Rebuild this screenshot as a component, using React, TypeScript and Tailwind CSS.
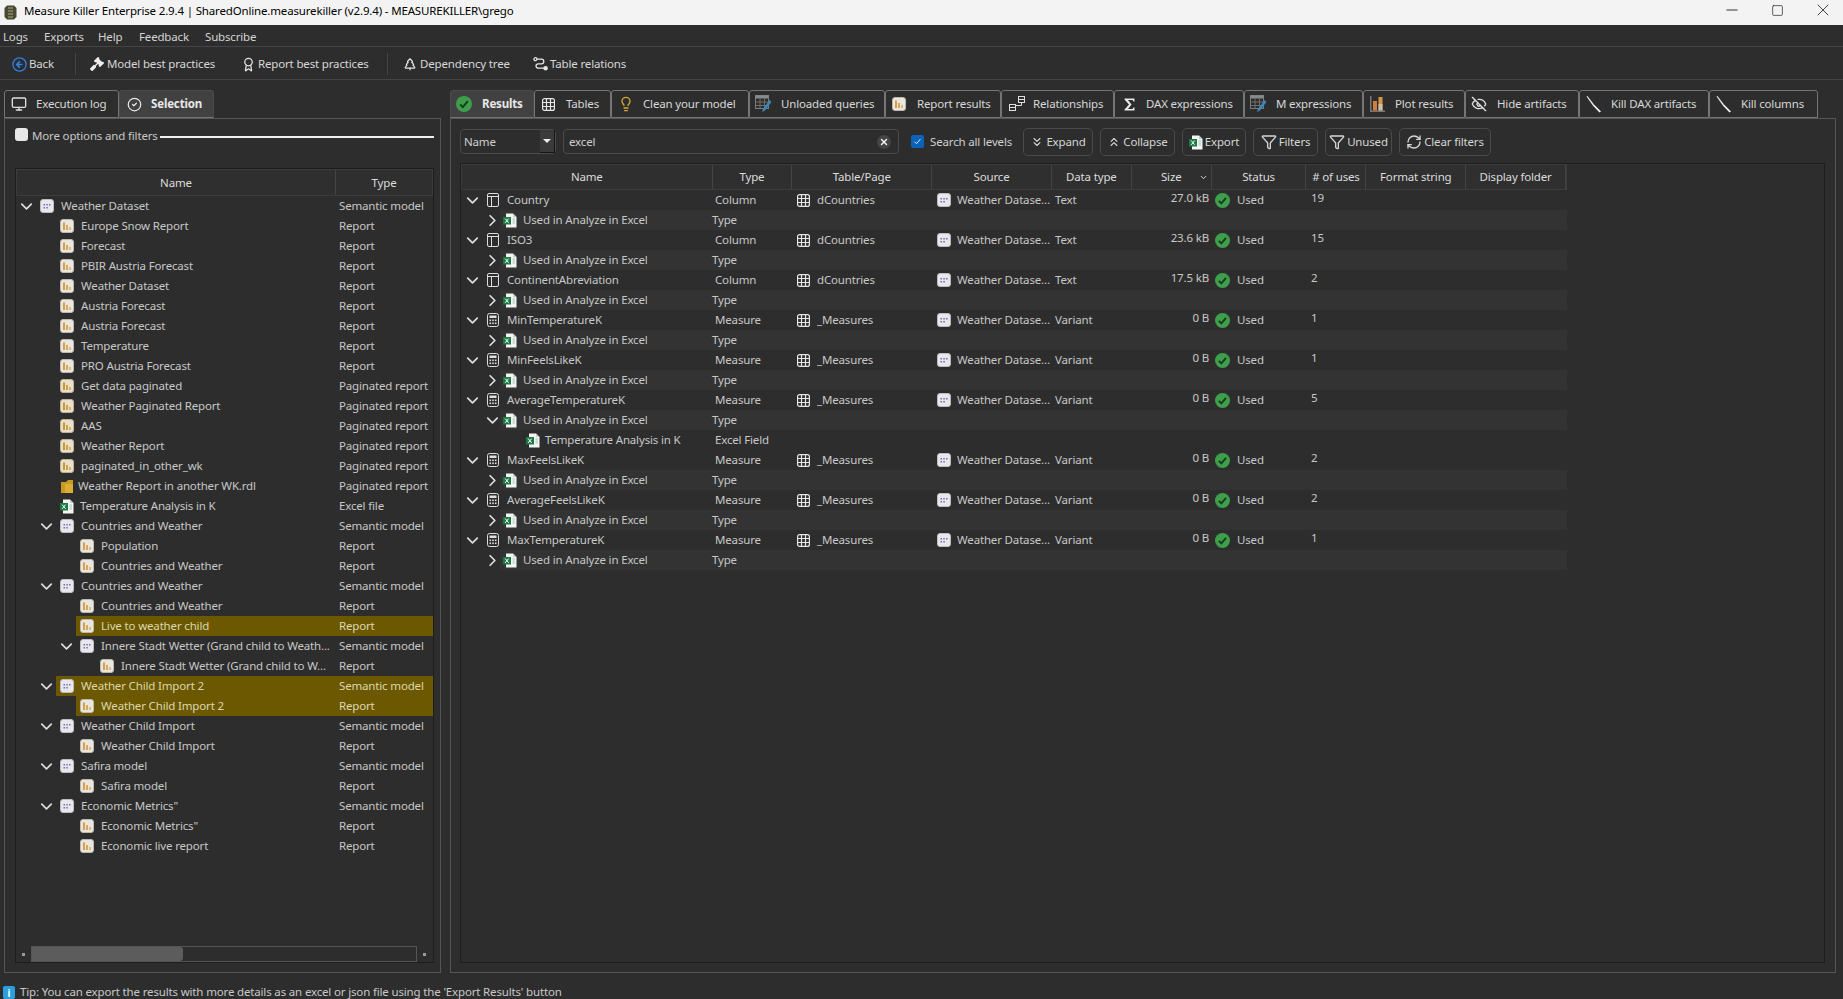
import type { ReactNode } from "react"
import {
  Award,
  ChevronDown,
  ChevronRight,
  ChevronsDown,
  ChevronsUp,
  CircleCheck,
  EyeOff,
  Funnel,
  Lightbulb,
  Minus,
  Monitor,
  RefreshCw,
  Square,
  TreePine,
  X,
} from "lucide-react"
import { FaGavel } from "react-icons/fa"

function ReportIcon() {
  return (
    <svg width="14" height="14" viewBox="0 0 14 14" className="shrink-0">
      <rect x="0.5" y="0.5" width="13" height="13" rx="2.5" fill="#e9e6e0" stroke="#bdb9b0" />
      <rect x="3" y="3.5" width="2" height="7.5" fill="#d99f45" />
      <rect x="6" y="6" width="2" height="5" fill="#d9a654" />
      <rect x="9" y="8" width="2" height="3" fill="#dfb878" />
    </svg>
  )
}

function PaginatedIcon() {
  return (
    <svg width="14" height="14" viewBox="0 0 14 14" className="shrink-0">
      <rect x="0.5" y="0.5" width="13" height="13" rx="2.5" fill="#e9e0cc" stroke="#bdb39c" />
      <rect x="3" y="3.5" width="2" height="7.5" fill="#c9962f" />
      <rect x="6" y="6" width="2" height="5" fill="#d0a040" />
      <rect x="9" y="8" width="2" height="3" fill="#d8b060" />
    </svg>
  )
}

function GoldIcon() {
  return (
    <svg width="14" height="15" viewBox="0 0 14 15" className="shrink-0">
      <path d="M1 3h5l2-2h5v13H1z" fill="#c79a26" />
      <rect x="5" y="5" width="8" height="9" fill="#dcae33" />
    </svg>
  )
}

function ModelIcon() {
  return (
    <svg width="14" height="14" viewBox="0 0 14 14" className="shrink-0">
      <rect x="0.5" y="0.5" width="13" height="13" rx="2.5" fill="#e8e8ec" stroke="#bcbcc2" />
      <g fill="#6f6fb5">
        <rect x="3.5" y="5" width="1.5" height="1.5" />
        <rect x="6.3" y="5" width="1.5" height="1.5" />
        <rect x="9" y="5" width="1.5" height="1.5" />
        <rect x="3.5" y="8" width="1.5" height="1.5" />
        <rect x="6.3" y="8" width="1.5" height="1.5" />
      </g>
    </svg>
  )
}

function ExcelIcon() {
  return (
    <svg width="14" height="15" viewBox="0 0 14 15" className="shrink-0">
      <path d="M3 0.5h7l3.5 3.5v10.5H3z" fill="#f5f5f5" />
      <path d="M10 0.5l3.5 3.5H10z" fill="#c9c9c9" />
      <rect x="0" y="4" width="8" height="7.5" fill="#1e7a45" />
      <path d="M2.2 5.6l3.4 4.2M5.6 5.6l-3.4 4.2" stroke="#fff" strokeWidth="1" />
      <path d="M9.5 6h2.5M9.5 8h2.5M9.5 10h2.5" stroke="#9bc9ac" strokeWidth="1" />
    </svg>
  )
}

function TableIcon() {
  return (
    <svg width="13" height="13" viewBox="0 0 13 13" fill="none" stroke="#e6e6e6" strokeWidth="1.2" className="shrink-0">
      <rect x="0.6" y="0.6" width="11.8" height="11.8" rx="2" />
      <path d="M4.5 0.6v11.8M8.5 0.6v11.8M0.6 4.5h11.8M0.6 8.5h11.8" />
    </svg>
  )
}

function ColumnIcon() {
  return (
    <svg width="13" height="14" viewBox="0 0 13 14" fill="none" stroke="#dedede" strokeWidth="1" className="shrink-0">
      <rect x="0.5" y="0.5" width="11" height="13" rx="1.5" />
      <path d="M0.5 3.5h11M4.5 3.5v10" />
    </svg>
  )
}

function MeasureIcon() {
  return (
    <svg width="13" height="14" viewBox="0 0 13 14" fill="none" stroke="#dedede" strokeWidth="1" className="shrink-0">
      <rect x="0.5" y="0.5" width="11" height="13" rx="2" />
      <rect x="2.5" y="2.5" width="7" height="2.5" fill="#dedede" stroke="none" />
      <g fill="#dedede" stroke="none">
        <rect x="2.5" y="6.5" width="1.6" height="1.6" />
        <rect x="5.2" y="6.5" width="1.6" height="1.6" />
        <rect x="7.9" y="6.5" width="1.6" height="1.6" />
        <rect x="2.5" y="9.5" width="1.6" height="1.6" />
        <rect x="5.2" y="9.5" width="1.6" height="1.6" />
        <rect x="7.9" y="9.5" width="1.6" height="1.6" />
      </g>
    </svg>
  )
}

function GreenCheck({ size = 15 }: { size?: number }) {
  return (
    <svg width={size} height={size} viewBox="0 0 16 16" className="shrink-0">
      <circle cx="8" cy="8" r="8" fill="#3f9e4b" />
      <path d="M4.2 8.4l2.6 2.7 5-6" fill="none" stroke="#173c1d" strokeWidth="2" />
    </svg>
  )
}

function BackIcon() {
  return (
    <svg width="15" height="15" viewBox="0 0 15 15" fill="none" stroke="#2f80e4" strokeWidth="1.3" className="shrink-0">
      <circle cx="7.5" cy="7.5" r="6.6" />
      <path d="M7.8 4.4L4.7 7.5l3.1 3.1M5 7.5h5.4" strokeWidth="1.6" />
    </svg>
  )
}

function RelationIcon() {
  return (
    <svg width="15" height="15" viewBox="0 0 15 15" fill="none" stroke="#e6e6e6" strokeWidth="1.3" className="shrink-0">
      <circle cx="2.4" cy="2.2" r="1.5" />
      <path d="M4 2.2h4.5a2 2 0 0 1 0 4.6H5.2a2 2 0 0 0 0 4.4h6" />
      <circle cx="12.6" cy="11.2" r="1.6" fill="#e6e6e6" />
    </svg>
  )
}

function TablePencilIcon() {
  return (
    <svg width="18" height="18" viewBox="0 0 18 18" fill="none" className="shrink-0">
      <rect x="0.5" y="0.5" width="13" height="13" stroke="#7c7c7c" />
      <rect x="0.5" y="0.5" width="13" height="3" fill="#8a8a8a" />
      <path d="M5 3.5v10M9.5 3.5v10M0.5 7h13M0.5 10.5h13" stroke="#6e6e6e" />
      <path d="M14.5 5L8 14l-1 3 3-1.5L16.5 7z" fill="#3c86b8" />
    </svg>
  )
}

function PlotIcon() {
  return (
    <svg width="15" height="16" viewBox="0 0 15 16" className="shrink-0">
      <rect x="0" y="0" width="1.5" height="16" fill="#777" />
      <rect x="0" y="14.5" width="15" height="1.5" fill="#777" />
      <rect x="3" y="5" width="4" height="9.5" fill="#d17f37" />
      <rect x="8.5" y="1" width="4" height="13.5" fill="#d89544" />
      <rect x="8.5" y="8" width="4" height="6.5" fill="#c9bfb0" />
    </svg>
  )
}

function RelationshipsIcon() {
  return (
    <svg width="16" height="16" viewBox="0 0 16 16" fill="none" stroke="#dedede" strokeWidth="1" className="shrink-0">
      <rect x="0.5" y="8.5" width="6" height="6" />
      <path d="M0.5 11.5h6" />
      <rect x="9.5" y="0.5" width="6" height="6" />
      <path d="M9.5 3.5h6M12.5 6.5v3H6.5" />
    </svg>
  )
}

function KillIcon() {
  return (
    <svg width="16" height="17" viewBox="0 0 16 17" className="shrink-0">
      <path d="M0.5 0.5L1.5 0L8 8.5L6.8 9.5z" fill="#e8e8e8" />
      <path d="M6.8 9.5L8 8.5L15 15.5L13.5 16.5z" fill="#f5f5f5" />
    </svg>
  )
}

function SigmaIcon() {
  return (
    <svg width="11" height="13" viewBox="0 0 11 13" className="shrink-0">
      <path d="M0.5 0.5h10v3h-1l-1-1.4H4L7.5 6.5 4 11h4.5l1-1.5h1v3h-10v-1L5 6.6 0.5 1.5z" fill="#e8e8e8" />
    </svg>
  )
}

function AppLogo() {
  return (
    <svg width="13" height="15" viewBox="0 0 13 15" className="shrink-0">
      <path d="M3 0.5h7l2.5 2.5v9L10 14.5H3L0.5 12V3z" fill="#4a4a34" />
      <path d="M4 3h5M4 6h5M4 9h5M4 12h5" stroke="#a8a888" strokeWidth="1.2" />
    </svg>
  )
}

function ChevDown() {
  return <ChevronDown size={19} strokeWidth={2.2} color="#dcdcdc" className="shrink-0" />
}

function ChevRight() {
  return <ChevronRight size={19} strokeWidth={2.2} color="#dcdcdc" className="shrink-0" />
}

const tabsRight: { label: string; w: string; icon: ReactNode; active?: boolean; pl: string }[] = [
  { label: "Results", w: "w-[84px]", icon: <GreenCheck size={16} />, active: true, pl: "pl-[5px]" },
  { label: "Tables", w: "w-[77px]", icon: <TableIcon />, pl: "pl-[7px]" },
  { label: "Clean your model", w: "w-[138px]", icon: <Lightbulb size={16} color="#d8a93a" className="shrink-0" />, pl: "pl-[6px]" },
  { label: "Unloaded queries", w: "w-[136px]", icon: <TablePencilIcon />, pl: "pl-[5px]" },
  { label: "Report results", w: "w-[116px]", icon: <ReportIcon />, pl: "pl-[6px]" },
  { label: "Relationships", w: "w-[113px]", icon: <RelationshipsIcon />, pl: "pl-[7px]" },
  { label: "DAX expressions", w: "w-[130px]", icon: <SigmaIcon />, pl: "pl-[9px]" },
  { label: "M expressions", w: "w-[119px]", icon: <TablePencilIcon />, pl: "pl-[5px]" },
  { label: "Plot results", w: "w-[102px]", icon: <PlotIcon />, pl: "pl-[6px]" },
  { label: "Hide artifacts", w: "w-[114px]", icon: <EyeOff size={16} color="#e0e0e0" className="shrink-0" />, pl: "pl-[5px]" },
  { label: "Kill DAX artifacts", w: "w-[130px]", icon: <KillIcon />, pl: "pl-[6px]" },
  { label: "Kill columns", w: "w-[109px]", icon: <KillIcon />, pl: "pl-[6px]" },
]

type TreeRow = {
  name: string
  type: string
  level: 0 | 1 | 2 | 3
  kind: "model" | "report" | "paginated" | "gold" | "excel"
  open?: boolean
  hl?: boolean
}

const r = (name: string, level: TreeRow["level"] = 1): TreeRow => ({ name, type: "Report", level, kind: "report" })
const p = (name: string): TreeRow => ({ name, type: "Paginated report", level: 1, kind: "paginated" })
const m = (name: string, level: TreeRow["level"] = 1): TreeRow => ({ name, type: "Semantic model", level, kind: "model", open: true })

const treeRows: TreeRow[] = [
  m("Weather Dataset", 0),
  r("Europe Snow Report"),
  r("Forecast"),
  r("PBIR Austria Forecast"),
  r("Weather Dataset"),
  r("Austria Forecast"),
  r("Austria Forecast"),
  r("Temperature"),
  r("PRO Austria Forecast"),
  p("Get data paginated"),
  p("Weather Paginated Report"),
  p("AAS"),
  p("Weather Report"),
  p("paginated_in_other_wk"),
  { name: "Weather Report in another WK.rdl", type: "Paginated report", level: 1, kind: "gold" },
  { name: "Temperature Analysis in K", type: "Excel file", level: 1, kind: "excel" },
  m("Countries and Weather"),
  r("Population", 2),
  r("Countries and Weather", 2),
  m("Countries and Weather"),
  r("Countries and Weather", 2),
  { ...r("Live to weather child", 2), hl: true },
  m("Innere Stadt Wetter (Grand child to Weath...", 2),
  r("Innere Stadt Wetter (Grand child to W...", 3),
  { ...m("Weather Child Import 2"), hl: true },
  { ...r("Weather Child Import 2", 2), hl: true },
  m("Weather Child Import"),
  r("Weather Child Import", 2),
  m("Safira model"),
  r("Safira model", 2),
  m("Economic Metrics\""),
  r("Economic Metrics\"", 2),
  r("Economic live report", 2),
]

const levelPad = ["pl-0", "pl-[20px]", "pl-[40px]", "pl-[60px]"]

function TreeIcon({ kind }: { kind: TreeRow["kind"] }) {
  if (kind === "model") return <ModelIcon />
  if (kind === "report") return <ReportIcon />
  if (kind === "paginated") return <PaginatedIcon />
  if (kind === "gold") return <GoldIcon />
  return <ExcelIcon />
}

type ResultRow =
  | { t: "col"; name: string; table: string; size: string; uses: string; dtype: string; kind: "Column" | "Measure" }
  | { t: "used"; open?: boolean }
  | { t: "field" }

const col = (name: string, size: string, uses: string): ResultRow => ({ t: "col", name, table: "dCountries", size, uses, dtype: "Text", kind: "Column" })
const mea = (name: string, uses: string): ResultRow => ({ t: "col", name, table: "_Measures", size: "0 B", uses, dtype: "Variant", kind: "Measure" })
const used: ResultRow = { t: "used" }

const resultRows: ResultRow[] = [
  col("Country", "27.0 kB", "19"), used,
  col("ISO3", "23.6 kB", "15"), used,
  col("ContinentAbreviation", "17.5 kB", "2"), used,
  mea("MinTemperatureK", "1"), used,
  mea("MinFeelsLikeK", "1"), used,
  mea("AverageTemperatureK", "5"), { t: "used", open: true }, { t: "field" },
  mea("MaxFeelsLikeK", "2"), used,
  mea("AverageFeelsLikeK", "2"), used,
  mea("MaxTemperatureK", "1"), used,
]

const resultCols = [
  { label: "Name", w: "w-[251px]" },
  { label: "Type", w: "w-[80px]" },
  { label: "Table/Page", w: "w-[140px]" },
  { label: "Source", w: "w-[120px]" },
  { label: "Data type", w: "w-[80px]" },
  { label: "Size", w: "w-[80px]" },
  { label: "Status", w: "w-[95px]" },
  { label: "# of uses", w: "w-[60px]" },
  { label: "Format string", w: "w-[100px]" },
  { label: "Display folder", w: "w-[100px]" },
]

function ToolBtn({ w, icon, label }: { w: string; icon: ReactNode; label: string }) {
  return (
    <div className={`flex h-[28px] ${w} items-center justify-center gap-[2px] rounded-[5px] border border-[#4a4a4a] text-[#d6d6d6]`}>
      {icon}
      <span>{label}</span>
    </div>
  )
}

function Tab({ w, icon, label, active, pl }: { w: string; icon: ReactNode; label: string; active?: boolean; pl: string }) {
  return (
    <div
      className={`flex h-[28px] ${w} items-center overflow-hidden whitespace-nowrap rounded-t-[3px] border ${
        active ? "border-[#4a4a4a] border-b-[#777] bg-[#414141] font-bold text-[#e8e8e8]" : "border-[#757575] text-[#d8d8d8]"
      }`}
    >
      <span className={`flex w-[31px] shrink-0 items-center ${pl}`}>{icon}</span>
      <span>{label}</span>
    </div>
  )
}

function ToolItem({ w, icon, label }: { w: string; icon: ReactNode; label: string }) {
  return (
    <div className={`flex ${w} items-center whitespace-nowrap`}>
      <span className="flex w-[17px] shrink-0 items-center">{icon}</span>
      <span>{label}</span>
    </div>
  )
}

function TreePanel() {
  return (
    <div className="flex min-h-0 flex-1 flex-col border border-[#1d1d1d]">
      <div className="flex h-[27px] shrink-0 border border-[#3c3c3c] bg-[#2f2f2f] text-[#dcdcdc]">
        <div className="flex w-[319px] items-center justify-center border-r border-[#444]">Name</div>
        <div className="flex flex-1 items-center justify-center">Type</div>
      </div>
      <div className="min-h-0 flex-1 overflow-hidden">
        {treeRows.map((row, i) => (
          <div key={i} className={`flex h-[20px] whitespace-nowrap ${row.hl ? "text-[#ded7ac]" : "text-[#c8c8c8]"}`}>
            <div className={`flex w-[320px] items-center ${levelPad[row.level]}`}>
              <span className="flex w-[20px] shrink-0 justify-center">{row.open && <ChevDown />}</span>
              <div className={`flex h-full flex-1 items-center whitespace-nowrap pl-[4px] ${row.hl ? "bg-[#6b5800]" : ""}`}>
                <TreeIcon kind={row.kind} />
                <span className={row.kind === "gold" ? "ml-[4px]" : row.kind === "excel" ? "ml-[6px]" : "ml-[7px]"}>{row.name}</span>
              </div>
            </div>
            <div className={`flex flex-1 items-center pl-[3px] ${row.hl ? "bg-[#6b5800]" : ""}`}>{row.type}</div>
          </div>
        ))}
      </div>
      <div className="flex h-[16px] shrink-0 items-center">
        <span className="ml-[6px] h-[3px] w-[3px] bg-[#999]" />
        <div className="ml-[6px] flex h-full w-[386px] border border-[#555]">
          <div className="h-full w-[151px] rounded-r-[3px] bg-[#5c5c5c]" />
        </div>
        <span className="ml-[6px] h-[3px] w-[3px] bg-[#999]" />
      </div>
    </div>
  )
}

function ResultsTable() {
  return (
    <div className="flex min-h-0 flex-1 flex-col whitespace-nowrap border border-[#1d1d1d]">
      <div className="flex h-[26px] w-[1106px] shrink-0 border border-[#3c3c3c] bg-[#2f2f2f] text-[#dcdcdc]">
        {resultCols.map((c) => (
          <div key={c.label} className={`relative flex ${c.w} items-center justify-center border-r border-[#444]`}>
            {c.label}
            {c.label === "Size" && <ChevronDown size={9} strokeWidth={2.5} className="absolute right-[3px]" />}
          </div>
        ))}
      </div>
      {resultRows.map((row, i) => {
        if (row.t === "col") {
          return (
            <div key={i} className="flex h-[20px] w-[1106px] items-center text-[#c8c8c8]">
              <div className="flex w-[251px] items-center">
                <span className="ml-[3px] flex w-[16px] justify-center"><ChevDown /></span>
                <span className="ml-[7px]">{row.kind === "Column" ? <ColumnIcon /> : <MeasureIcon />}</span>
                <span className="ml-[7px]">{row.name}</span>
              </div>
              <div className="w-[80px] pl-[3px]">{row.kind}</div>
              <div className="flex w-[140px] items-center pl-[5px]">
                <TableIcon />
                <span className="ml-[7px]">{row.table}</span>
              </div>
              <div className="flex w-[120px] items-center pl-[5px]">
                <ModelIcon />
                <span className="ml-[6px]">Weather Datase...</span>
              </div>
              <div className="w-[80px] pl-[3px]">{row.dtype}</div>
              <div className="mb-[4px] w-[77px] text-right">{row.size}</div>
              <div className="flex w-[98px] items-center pl-[6px]">
                <GreenCheck />
                <span className="ml-[7px]">Used</span>
              </div>
              <div className="mb-[4px] pl-[4px]">{row.uses}</div>
            </div>
          )
        }
        if (row.t === "used") {
          return (
            <div key={i} className="flex h-[20px] w-[1106px] items-center text-[#c8c8c8]">
              <span className="ml-[23px] flex w-[16px] justify-center">{row.open ? <ChevDown /> : <ChevRight />}</span>
              <div className="flex h-full flex-1 items-center bg-[#333333] pl-[3px]">
                <ExcelIcon />
                <span className="ml-[6px] w-[189px]">Used in Analyze in Excel</span>
                <span>Type</span>
              </div>
            </div>
          )
        }
        return (
          <div key={i} className="flex h-[20px] w-[1106px] items-center text-[#c8c8c8]">
            <span className="ml-[65px]"><ExcelIcon /></span>
            <span className="ml-[5px] w-[170px]">Temperature Analysis in K</span>
            <span>Excel Field</span>
          </div>
        )
      })}
    </div>
  )
}

export default function App() {
  return (
    <div className="flex h-[999px] w-[1843px] flex-col overflow-hidden bg-[#2d2d2d] font-['Noto_Sans',sans-serif] text-[11.5px] tracking-[-0.16px]">
      <div className="flex h-[25px] shrink-0 items-center bg-[#f3f3f3] pl-[4px] text-black">
        <AppLogo />
        <span className="ml-[7px] flex-1 pb-[3px]">Measure Killer Enterprise 2.9.4 | SharedOnline.measurekiller (v2.9.4) - MEASUREKILLER\grego</span>
        <div className="flex items-center pb-[5px] text-[#222]">
          <span className="flex w-[38px] justify-center"><Minus size={18} strokeWidth={1.2} /></span>
          <span className="flex w-[52px] justify-center"><Square size={13} strokeWidth={1.3} /></span>
          <span className="flex w-[40px] justify-center"><X size={20} strokeWidth={1} /></span>
        </div>
      </div>

      <div className="flex h-[22px] shrink-0 items-center border-b border-[#444] pl-[3px] pt-[2px] text-[#d4d4d4]">
        <span className="w-[41px]">Logs</span>
        <span className="w-[54px]">Exports</span>
        <span className="w-[41px]">Help</span>
        <span className="w-[66px]">Feedback</span>
        <span>Subscribe</span>
      </div>

      <div className="flex h-[33px] shrink-0 items-center border-b border-[#444] pl-[12px] pt-[2px] text-[#d8d8d8]">
        <ToolItem w="w-[63px]" icon={<BackIcon />} label="Back" />
        <div className="h-[22px] w-px bg-[#444]" />
        <div className="ml-[14px] w-[151px]"><ToolItem w="w-full" icon={<FaGavel size={14} color="#eee" />} label="Model best practices" /></div>
        <ToolItem w="w-[146px]" icon={<Award size={15} color="#e6e6e6" />} label="Report best practices" />
        <div className="h-[22px] w-px bg-[#444]" />
        <div className="ml-[15px]"><ToolItem w="w-[130px]" icon={<TreePine size={14} color="#e6e6e6" />} label="Dependency tree" /></div>
        <ToolItem w="w-[100px]" icon={<RelationIcon />} label="Table relations" />
      </div>

      <div className="flex min-h-0 flex-1 gap-[9px] pl-[4px] pt-[10px]">
        <div className="flex w-[437px] shrink-0 flex-col">
          <div className="flex h-[28px] shrink-0">
            <Tab w="w-[115px]" pl="pl-[6px]" icon={<Monitor size={16} color="#e0e0e0" className="shrink-0" />} label="Execution log" />
            <Tab w="w-[95px]" pl="pl-[7px]" icon={<CircleCheck size={15} color="#e6e6e6" className="shrink-0" />} label="Selection" active />
          </div>
          <div className="flex min-h-0 flex-1 flex-col border border-[#555] pb-[9px] pl-[10px] pr-[6px]">
            <div className="flex h-[49px] shrink-0 items-start pt-[9px]">
              <span className="h-[13px] w-[13px] shrink-0 rounded-[3px] bg-[#e8e8e8]" />
              <span className="-mt-[1px] ml-[4px] whitespace-nowrap text-[#c8c8c8]">More options and filters</span>
              <span className="ml-[2px] mt-[8px] h-[2px] flex-1 bg-[#f0f0f0]" />
            </div>
            <TreePanel />
          </div>
        </div>

        <div className="flex w-[1386px] shrink-0 flex-col">
          <div className="flex h-[28px] shrink-0">
            {tabsRight.map((t) => (
              <Tab key={t.label} {...t} />
            ))}
          </div>
          <div className="flex min-h-0 flex-1 flex-col border border-[#555] pb-[9px] pl-[9px] pr-[10px]">
            <div className="flex h-[44px] shrink-0 items-start pt-[9px] text-[#d0d0d0]">
              <div className="mt-[1px] flex h-[25px] w-[96px] items-center justify-between rounded-[4px] border border-[#4a4a4a] pl-[3px]">
                <span>Name</span>
                <span className="flex h-full w-[15px] items-center justify-center border-b border-r border-[#151515] bg-[#3a3a3a]">
                  <span className="h-0 w-0 border-x-[4px] border-t-[4px] border-x-transparent border-t-[#eee]" />
                </span>
              </div>
              <div className="ml-[7px] mt-[1px] flex h-[25px] w-[336px] items-center justify-between rounded-[4px] border border-[#4a4a4a] pl-[5px] pr-[7px]">
                <span>excel</span>
                <span className="flex h-[14px] w-[14px] items-center justify-center rounded-full bg-[#444]">
                  <X size={10} strokeWidth={3.5} color="#f2f2f2" />
                </span>
              </div>
              <div className="ml-[12px] mt-[1px] flex h-[25px] w-[112px] items-center">
                <span className="flex h-[13px] w-[13px] items-center justify-center rounded-[2px] bg-[#0b62b8]">
                  <svg width="9" height="9" viewBox="0 0 9 9" fill="none" stroke="#dce9f7" strokeWidth="1"><path d="M1.5 4.7l2 2 4-4.7" /></svg>
                </span>
                <span className="ml-[6px] whitespace-nowrap">Search all levels</span>
              </div>
              <div className="flex gap-[7px]">
                <ToolBtn w="w-[70px]" icon={<ChevronsDown size={14} />} label="Expand" />
                <ToolBtn w="w-[75px]" icon={<ChevronsUp size={14} />} label="Collapse" />
                <ToolBtn w="w-[64px]" icon={<ExcelIcon />} label="Export" />
                <ToolBtn w="w-[65px]" icon={<Funnel size={16} />} label="Filters" />
                <ToolBtn w="w-[67px]" icon={<Funnel size={16} />} label="Unused" />
                <ToolBtn w="w-[92px]" icon={<RefreshCw size={16} />} label="Clear filters" />
              </div>
            </div>
            <ResultsTable />
          </div>
        </div>
      </div>

      <div className="flex h-[26px] shrink-0 items-start overflow-hidden pl-[3px] pt-[12px] text-[#c8c8c8]">
        <span className="mt-[1px] flex h-[13px] w-[12px] items-center justify-center rounded-[2px] bg-[#2a9fe0] text-[10px] font-bold leading-none text-white">i</span>
        <span className="ml-[5px] leading-[14px]">Tip: You can export the results with more details as an excel or json file using the 'Export Results' button</span>
      </div>
    </div>
  )
}
